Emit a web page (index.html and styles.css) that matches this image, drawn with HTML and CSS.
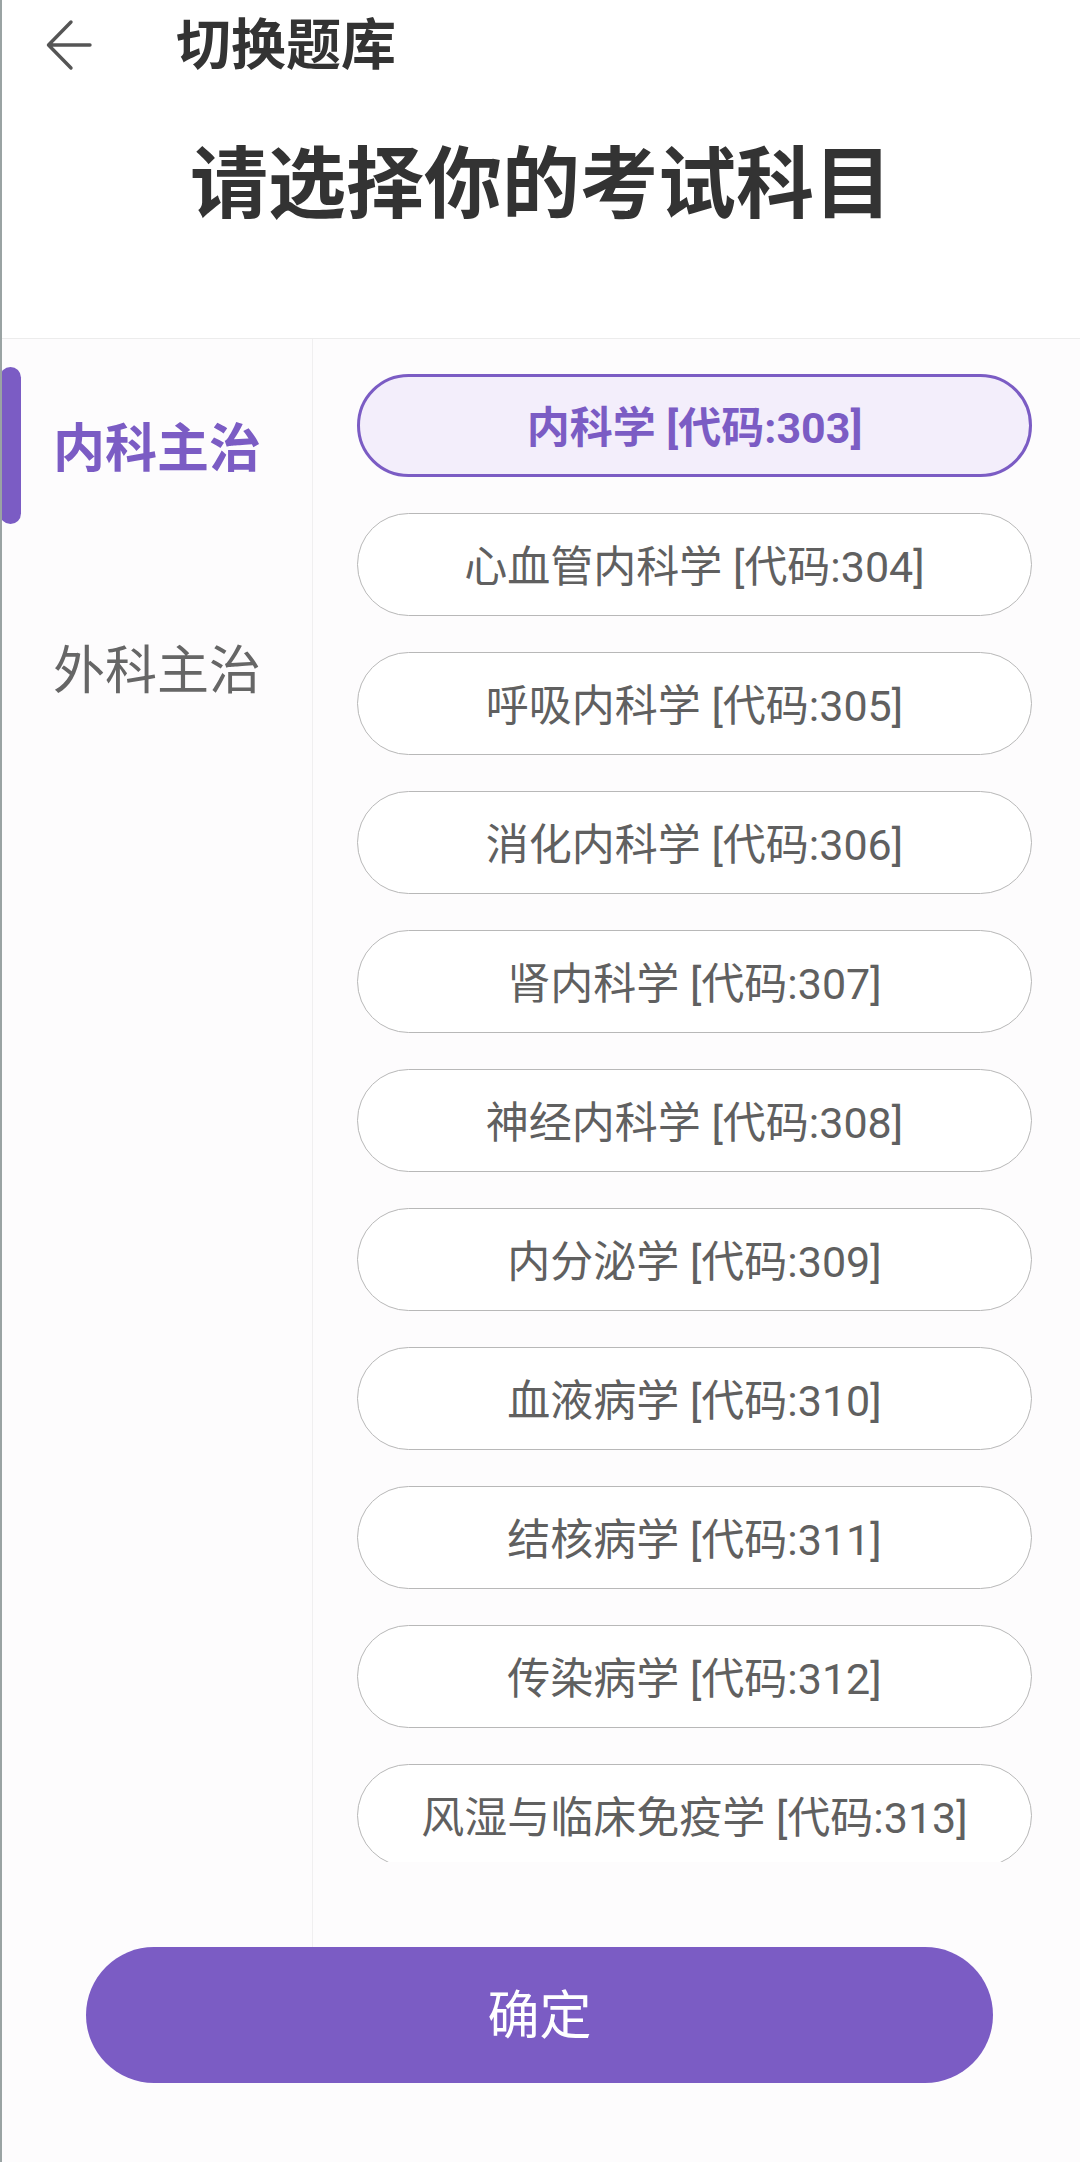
FILE: index.html
```html
<!DOCTYPE html>
<html lang="zh-CN">
<head>
<meta charset="utf-8">
<title>切换题库</title>
<link rel="stylesheet" href="styles.css">
</head>
<body>
<div class="page">
  <header class="header">
    <div class="topbar">
      <svg class="back" width="48" height="52" viewBox="0 0 48 52" aria-hidden="true">
        <path d="M44 26 H3 M25 3 L2.5 26 L25 49" fill="none" stroke="#555" stroke-width="3.4" stroke-linecap="round" stroke-linejoin="round"/>
      </svg>
      <div class="title">切换题库</div>
    </div>
    <h1 class="heading">请选择你的考试科目</h1>
  </header>

  <main class="main">
    <nav class="sidebar">
      <div class="side-item active">内科主治</div>
      <div class="side-item">外科主治</div>
    </nav>
    <section class="content">
      <div class="list">
        <div class="pill selected">内科学 [代码:303]</div>
        <div class="pill">心血管内科学 [代码:304]</div>
        <div class="pill">呼吸内科学 [代码:305]</div>
        <div class="pill">消化内科学 [代码:306]</div>
        <div class="pill">肾内科学 [代码:307]</div>
        <div class="pill">神经内科学 [代码:308]</div>
        <div class="pill">内分泌学 [代码:309]</div>
        <div class="pill">血液病学 [代码:310]</div>
        <div class="pill">结核病学 [代码:311]</div>
        <div class="pill">传染病学 [代码:312]</div>
        <div class="pill">风湿与临床免疫学 [代码:313]</div>
      </div>
    </section>
  </main>

  <footer class="footer">
    <button class="confirm">确定</button>
  </footer>
</div>
</body>
</html>
```

FILE: styles.css
```css
* { box-sizing: border-box; }

html, body {
  margin: 0;
  padding: 0;
  background: #fff;
}

body {
  font-family: Roboto, "Noto Sans CJK SC", "Noto Sans", sans-serif;
  color: #333;
}

.page {
  width: 1080px;
  height: 2162px;
  display: flex;
  flex-direction: column;
  border-left: 2px solid #9aa3a3;
  background: #fdfcfd;
  overflow: hidden;
}

.header {
  height: 339px;
  background: #fff;
  border-bottom: 1px solid #ececec;
  flex-shrink: 0;
}

.topbar {
  height: 90px;
  display: flex;
  align-items: center;
  padding-left: 44px;
}

.back {
  display: block;
  flex-shrink: 0;
}

.title {
  margin-left: 82px;
  font-size: 55px;
  font-weight: 700;
  color: #333;
  line-height: 1;
}

.heading {
  margin: 49px 0 0 0;
  text-align: center;
  font-size: 78px;
  font-weight: 700;
  line-height: 94px;
  color: #333;
  letter-spacing: 0;
}

.main {
  flex: 1;
  display: flex;
  min-height: 0;
}

.sidebar {
  width: 311px;
  flex-shrink: 0;
  border-right: 1px solid #f0eff0;
  padding-top: 28px;
  display: flex;
  flex-direction: column;
  gap: 65px;
}

.side-item {
  position: relative;
  height: 157px;
  display: flex;
  align-items: center;
  padding-left: 51px;
  padding-top: 8px;
  font-size: 52px;
  color: #666;
  line-height: 1;
}

.side-item.active {
  color: #7b5cc4;
  font-weight: 700;
}

.side-item.active::before {
  content: "";
  position: absolute;
  left: -2px;
  top: 0;
  width: 21px;
  height: 157px;
  border-radius: 11px;
  background: #7b5cc4;
}

.content {
  flex: 1;
  display: flex;
  flex-direction: column;
  padding-bottom: 85px;
  min-width: 0;
}

.list {
  flex: 1;
  overflow: hidden;
  padding: 35px 48px 0 44px;
  display: flex;
  flex-direction: column;
  gap: 36px;
}

.pill {
  flex-shrink: 0;
  height: 103px;
  border: 1.5px solid #b8b8b8;
  border-radius: 52px;
  background: #fff;
  display: flex;
  align-items: center;
  justify-content: center;
  padding-top: 5px;
  font-size: 43px;
  color: #606060;
  line-height: 1;
  white-space: nowrap;
}

.pill.selected {
  border: 3.5px solid #7b5cc4;
  background: #f3eefb;
  color: #7b5cc4;
  font-weight: 700;
}

.footer {
  flex-shrink: 0;
  height: 215px;
  padding: 0 0 79px 0;
  display: flex;
  justify-content: center;
}

.confirm {
  width: 907px;
  height: 136px;
  margin-left: -3px;
  border: none;
  border-radius: 68px;
  background: #7b5cc4;
  color: #fff;
  font-family: Roboto, "Noto Sans CJK SC", sans-serif;
  font-size: 52px;
  line-height: 1;
  padding: 4px 0 0 0;
}
```
